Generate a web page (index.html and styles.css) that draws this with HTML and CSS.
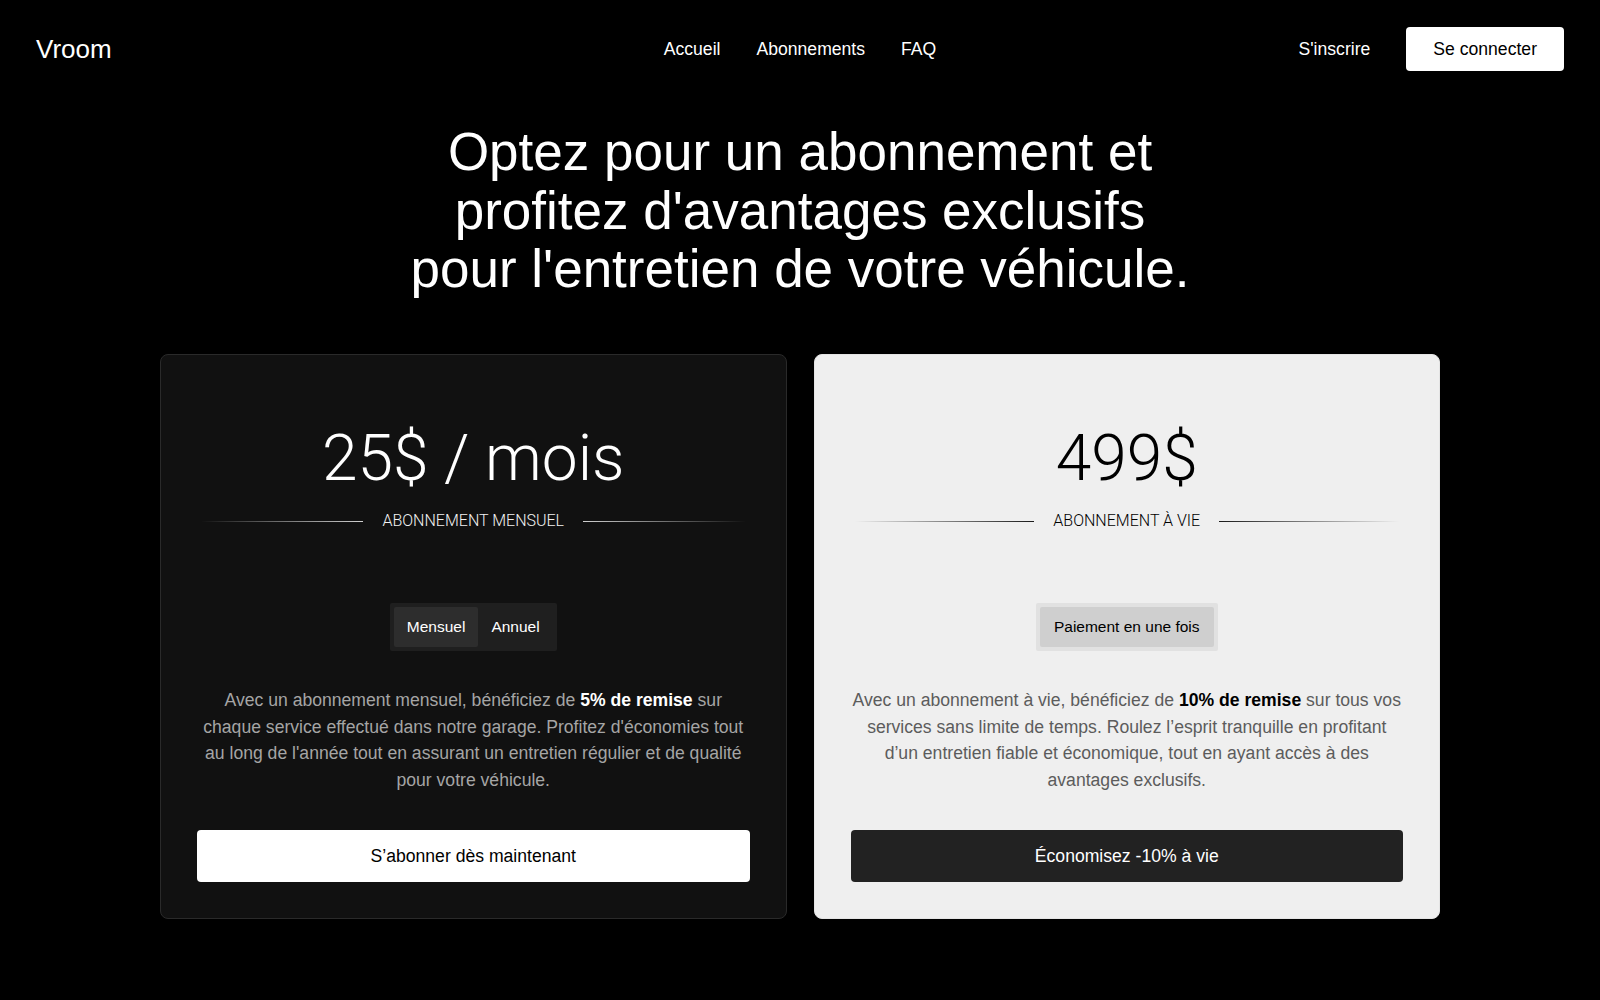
FILE: index.html
```html
<!DOCTYPE html>
<html lang="fr">
<head>
<meta charset="utf-8">
<title>Vroom – Abonnements</title>
<link rel="stylesheet" href="styles.css">
</head>
<body>
<header class="topbar">
  <a class="logo" href="#">Vroom</a>
  <nav class="mainnav">
    <a href="#">Accueil</a>
    <a href="#">Abonnements</a>
    <a href="#">FAQ</a>
  </nav>
  <div class="auth">
    <a class="signup" href="#">S'inscrire</a>
    <a class="login" href="#">Se connecter</a>
  </div>
</header>

<main>
  <h1 class="hero">Optez pour un abonnement et<br>profitez d'avantages exclusifs<br>pour l'entretien de votre véhicule.</h1>

  <section class="plans">
    <article class="card card-dark">
      <div class="price">25$ / mois</div>
      <div class="label-row"><span class="rule rule-left"></span><span class="label">ABONNEMENT MENSUEL</span><span class="rule rule-right"></span></div>
      <div class="toggle-wrap">
        <div class="toggle">
          <span class="opt active">Mensuel</span>
          <span class="opt">Annuel</span>
        </div>
      </div>
      <p class="desc"><span class="line">Avec un abonnement mensuel, bénéficiez de <strong>5% de remise</strong> sur</span><span class="line">chaque service effectué dans notre garage. Profitez d'économies tout</span><span class="line">au long de l'année tout en assurant un entretien régulier et de qualité</span><span class="line">pour votre véhicule.</span></p>
      <a class="cta" href="#">S’abonner dès maintenant</a>
    </article>

    <article class="card card-light">
      <div class="price">499$</div>
      <div class="label-row"><span class="rule rule-left"></span><span class="label">ABONNEMENT À VIE</span><span class="rule rule-right"></span></div>
      <div class="toggle-wrap">
        <div class="toggle">
          <span class="opt active">Paiement en une fois</span>
        </div>
      </div>
      <p class="desc"><span class="line">Avec un abonnement à vie, bénéficiez de <strong>10% de remise</strong> sur tous vos</span><span class="line">services sans limite de temps. Roulez l’esprit tranquille en profitant</span><span class="line">d’un entretien fiable et économique, tout en ayant accès à des</span><span class="line">avantages exclusifs.</span></p>
      <a class="cta" href="#">Économisez -10% à vie</a>
    </article>
  </section>
</main>
</body>
</html>
```

FILE: styles.css
```css
* { box-sizing: border-box; }

html, body {
  margin: 0;
  padding: 0;
  background: #000;
  color: #fff;
  font-family: "Liberation Sans", Arial, Helvetica, sans-serif;
}

a { color: inherit; text-decoration: none; }

.topbar {
  display: grid;
  grid-template-columns: 1fr auto 1fr;
  align-items: center;
  padding: 27px 36px 0;
  height: 71px;
}

.logo {
  font-size: 26px;
  line-height: 30px;
  color: #fff;
  justify-self: start;
}

.mainnav {
  display: flex;
  gap: 36px;
  font-size: 17.6px;
  line-height: 20px;
}

.auth {
  justify-self: end;
  display: flex;
  align-items: center;
  gap: 36px;
  font-size: 17.6px;
  line-height: 20px;
}

.login {
  background: #fff;
  color: #000;
  padding: 12px 27px;
  border-radius: 4px;
}

.hero {
  margin: 52px auto 0;
  text-align: center;
  font-weight: 400;
  font-size: 53px;
  line-height: 58.7px;
  color: #fff;
}

.plans {
  max-width: 1280px;
  margin: 55px auto 0;
  display: grid;
  grid-template-columns: 1fr 1fr;
  gap: 27px;
}

.card {
  border-radius: 8px;
  padding: 72px 36px 36px;
  display: flex;
  flex-direction: column;
}

.card-dark {
  background: #111111;
  border: 1px solid #2a2a2a;
}

.card-light {
  background: #efefef;
  border: 1px solid #e4e4e4;
  color: #000;
}

.price {
  font-family: Roboto, "Liberation Sans", sans-serif;
  font-weight: 300;
  font-size: 64px;
  line-height: 64px;
  text-align: center;
}

.label-row {
  margin-top: 20px;
  padding: 0 4px;
  display: flex;
  align-items: center;
  gap: 19px;
}

.label {
  font-family: Roboto, "Liberation Sans", sans-serif;
  font-weight: 300;
  font-size: 16px;
  line-height: 20px;
  white-space: nowrap;
}

.card-dark .label { color: #f2f2f2; }

.rule {
  flex: 1;
  height: 1px;
}

.card-dark .rule-left { background: linear-gradient(to right, rgba(255,255,255,0), #d0d0d0); }
.card-dark .rule-right { background: linear-gradient(to left, rgba(255,255,255,0), #d0d0d0); }
.card-light .rule-left { background: linear-gradient(to right, rgba(0,0,0,0), #1a1a1a); }
.card-light .rule-right { background: linear-gradient(to left, rgba(0,0,0,0), #1a1a1a); }

.toggle-wrap {
  margin-top: 72px;
  display: flex;
  justify-content: center;
}

.toggle {
  display: flex;
  padding: 4px;
  border-radius: 2px;
}

.opt {
  font-size: 15.5px;
  line-height: 18px;
  padding: 11px 13px;
  border-radius: 2px;
}

.card-dark .toggle { background: #1f1f1f; }
.card-dark .opt.active { background: #2d2d2d; }
.card-light .toggle { background: #e1e1e1; }
.card-light .opt { padding: 11px 14px; }
.card-light .opt.active { background: #cfcfcf; }

.desc {
  margin: 36px 0 0;
  text-align: center;
  font-size: 17.6px;
  line-height: 26.5px;
}

.desc .line { display: block; }

.card-dark .desc { color: #a5a5a5; }
.card-dark .desc strong { color: #fff; font-weight: 700; }
.card-light .desc { color: #5c5c5c; }
.card-light .desc strong { color: #000; font-weight: 700; }

.cta {
  margin-top: 37px;
  display: block;
  text-align: center;
  font-size: 17.6px;
  line-height: 20px;
  padding: 16px 0;
  border-radius: 4px;
}

.card-dark .cta { background: #fff; color: #000; }
.card-light .cta { background: #222; color: #fff; }
```
